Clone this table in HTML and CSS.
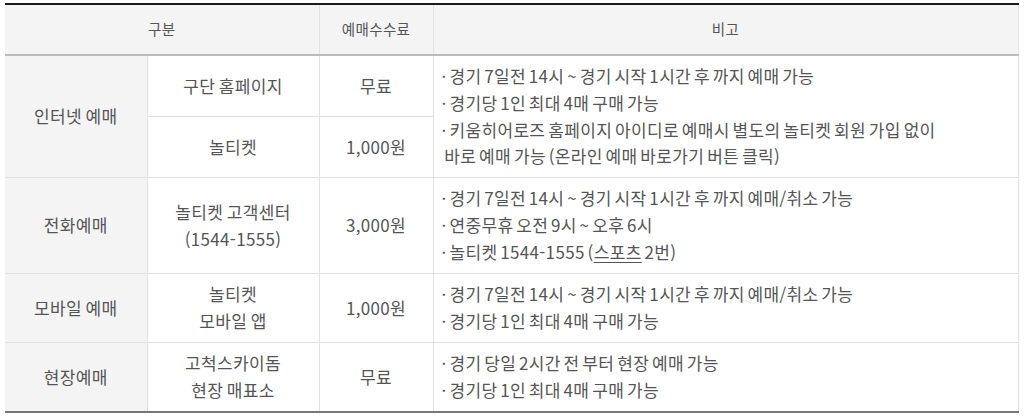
FILE: index.html
```html
<!DOCTYPE html>
<html lang="ko">
<head>
<meta charset="utf-8">
<link rel="stylesheet" href="styles.css">
</head>
<body>
<div class="wrap">
<table class="fee">
  <colgroup>
    <col class="c1"><col class="c2"><col class="c3"><col class="c4">
  </colgroup>
  <thead>
    <tr class="head">
      <th colspan="2">구분</th>
      <th>예매수수료</th>
      <th>비고</th>
    </tr>
  </thead>
  <tbody>
    <tr class="r-half">
      <th rowspan="2" class="cat">인터넷 예매</th>
      <td>구단 홈페이지</td>
      <td>무료</td>
      <td rowspan="2" class="note">
        · 경기 7일전 14시 ~ 경기 시작 1시간 후 까지 예매 가능<br>
        · 경기당 1인 최대 4매 구매 가능<br>
        · 키움히어로즈 홈페이지 아이디로 예매시 별도의 놀티켓 회원 가입 없이<br>
        &nbsp;바로 예매 가능 (온라인 예매 바로가기 버튼 클릭)
      </td>
    </tr>
    <tr class="r-half">
      <td>놀티켓</td>
      <td>1,000원</td>
    </tr>
    <tr class="r-phone">
      <th class="cat">전화예매</th>
      <td>놀티켓 고객센터<br>(1544-1555)</td>
      <td>3,000원</td>
      <td class="note">
        · 경기 7일전 14시 ~ 경기 시작 1시간 후 까지 예매/취소 가능<br>
        · 연중무휴 오전 9시 ~ 오후 6시<br>
        · 놀티켓 1544-1555 (<span class="u">스포츠</span> 2번)
      </td>
    </tr>
    <tr class="r-two">
      <th class="cat">모바일 예매</th>
      <td>놀티켓<br>모바일 앱</td>
      <td>1,000원</td>
      <td class="note">
        · 경기 7일전 14시 ~ 경기 시작 1시간 후 까지 예매/취소 가능<br>
        · 경기당 1인 최대 4매 구매 가능
      </td>
    </tr>
    <tr class="r-two last">
      <th class="cat">현장예매</th>
      <td>고척스카이돔<br>현장 매표소</td>
      <td>무료</td>
      <td class="note">
        · 경기 당일 2시간 전 부터 현장 예매 가능<br>
        · 경기당 1인 최대 4매 구매 가능
      </td>
    </tr>
  </tbody>
</table>
</div>
</body>
</html>
```

FILE: styles.css
```css
html, body {
  margin: 0;
  padding: 0;
  background: #fff;
}
.wrap {
  padding: 3px 6px 0 5px;
}
.fee {
  width: 1013px;
  border-collapse: collapse;
  table-layout: fixed;
  font-family: "Noto Sans CJK KR", "Noto Sans", sans-serif;
  color: #555;
  font-size: 17px;
  line-height: 26.7px;
  letter-spacing: 0.35px;
  border-top: 2px solid #1a1a1a;
  border-bottom: 2px solid #777;
  border-right: 1px solid #e2e2e2;
}
.c1 { width: 142px; }
.c2 { width: 172px; }
.c3 { width: 114px; }
.c4 { width: 585px; }
.fee th, .fee td {
  border: 1px solid #e2e2e2;
  text-align: center;
  vertical-align: middle;
  padding: 0;
  font-weight: normal;
  white-space: nowrap;
  word-spacing: -1.5px;
}
.head th {
  background: #f4f4f4;
  height: 49px;
  font-size: 14.5px;
  letter-spacing: 0.4px;
  border-bottom: 2px solid #bbb;
  border-top: 0;
}
.fee .cat {
  background: #f4f4f4;
  border-left: 0;
}
.head th:first-child { border-left: 0; }
.r-half td { height: 60px; }
.r-phone td { height: 95px; }
.r-two td { height: 68px; }
.fee td.note {
  text-align: left;
  padding-left: 8px;
  word-spacing: -2.3px;
}
.last th, .last td { border-bottom: 2px solid #777; }
.u { text-decoration: underline; text-underline-offset: 3px; }
```
